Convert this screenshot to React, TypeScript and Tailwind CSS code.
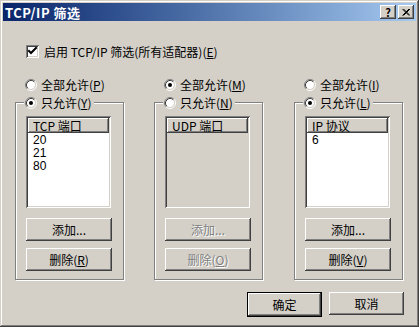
import React from "react";

const raised =
  "shadow-[inset_-1px_-1px_#404040,inset_1px_1px_#ffffff,inset_-2px_-2px_#808080,inset_2px_2px_#d4d0c8]";
const sunken =
  "shadow-[inset_1px_1px_#808080,inset_-1px_-1px_#ffffff,inset_2px_2px_#404040,inset_-2px_-2px_#d4d0c8]";

function Radio({ checked }: { checked: boolean }) {
  return (
    <svg width="12" height="12" viewBox="0 0 12 12" className="shrink-0">
      <circle cx="6" cy="6" r="4.2" fill="#ffffff" />
      <path d="M2.11 9.89 A5.5 5.5 0 0 1 9.89 2.11" stroke="#808080" fill="none" />
      <path d="M9.89 2.11 A5.5 5.5 0 0 1 2.11 9.89" stroke="#ffffff" fill="none" />
      <path d="M2.82 9.18 A4.5 4.5 0 0 1 9.18 2.82" stroke="#404040" fill="none" />
      <path d="M9.18 2.82 A4.5 4.5 0 0 1 2.82 9.18" stroke="#d4d0c8" fill="none" />
      {checked && <circle cx="6" cy="6" r="2" fill="#000000" />}
    </svg>
  );
}

function Checkbox() {
  return (
    <div className={`w-[13px] h-[13px] bg-white shrink-0 ${sunken}`}>
      <svg width="13" height="13" viewBox="0 0 13 13">
        <path d="M3 6 L5 8 L10 3" stroke="#000" strokeWidth="2" fill="none" strokeLinecap="square" />
      </svg>
    </div>
  );
}

function Btn({ children, disabled, w = "w-[86px]" }: { children: React.ReactNode; disabled?: boolean; w?: string }) {
  return (
    <div
      className={`${w} h-[23px] flex items-center justify-center ${raised} ${
        disabled ? "text-[#808080] [text-shadow:1px_1px_#ffffff]" : "text-black"
      }`}
    >
      {children}
    </div>
  );
}

function Column({
  allLabel,
  allKey,
  onlyKey,
  header,
  items,
  onlySelected,
  delKey,
  className,
}: {
  allLabel: string;
  allKey: string;
  onlyKey: string;
  header: string;
  items: string[];
  onlySelected: boolean;
  delKey: string;
  className?: string;
}) {
  const disabled = !onlySelected;
  return (
    <div className={`w-[110px] flex flex-col ${className ?? ""}`}>
      <div className="h-[16px] flex items-center pl-[10px] gap-[4px]">
        <Radio checked={!onlySelected} />
        <span>
          {allLabel}(<u>{allKey}</u>)
        </span>
      </div>
      <div className="relative mt-[9px] w-[109px] h-[178px] border border-[#808080] shadow-[inset_1px_1px_#ffffff,1px_1px_#ffffff] flex flex-col pl-[10px] pt-[13px]">
        <div className="absolute -top-[8px] left-[8px] h-[16px] flex items-center gap-[4px] bg-[#d4d0c8] pl-[1px] pr-[2px]">
          <Radio checked={onlySelected} />
          <span>
            只允许(<u>{onlyKey}</u>)
          </span>
        </div>
        <div className={`w-[85px] h-[92px] p-[2px] ${sunken} ${disabled ? "bg-[#d4d0c8]" : "bg-white"}`}>
          <div className={`h-[15px] flex items-center pl-[5px] bg-[#d4d0c8] ${raised}`}>{header}</div>
          <div className="flex flex-col pl-[5px] pt-[1px] font-['Liberation_Sans',sans-serif] text-[12px]">
            {items.map((it) => (
              <div key={it} className="h-[13px] leading-[13px]">
                {it}
              </div>
            ))}
          </div>
        </div>
        <div className="mt-[10px] flex flex-col gap-[7px]">
          <Btn disabled={disabled}>添加...</Btn>
          <Btn disabled={disabled}>
            删除(<u>{delKey}</u>)
          </Btn>
        </div>
      </div>
    </div>
  );
}

export default function App() {
  return (
    <div
      className={`w-[419px] h-[327px] bg-[#d4d0c8] p-[3px] flex flex-col text-[12px] text-black font-['Noto_Sans_CJK_SC',sans-serif] leading-none shadow-[inset_-1px_-1px_#404040,inset_1px_1px_#d4d0c8,inset_-2px_-2px_#808080,inset_2px_2px_#ffffff]`}
    >
      <div className="h-[18px] flex items-center justify-between bg-gradient-to-r from-[#0a246a] to-[#a6caf0] pl-[2px] pr-[2px]">
        <span className="text-white font-bold text-[13px] tracking-[0.5px]">TCP/IP 筛选</span>
        <div className="flex items-center">
          <div className={`w-[16px] h-[14px] flex items-center justify-center font-bold text-[11px] bg-[#d4d0c8] ${raised}`}>?</div>
          <div className={`ml-[2px] w-[16px] h-[14px] flex items-center justify-center bg-[#d4d0c8] ${raised}`}>
            <svg width="8" height="7" viewBox="0 0 8 7">
              <path d="M0.5 0 L7 6.5 M1.5 0 L8 6.5 M7 0 L0.5 6.5 M8 0 L1.5 6.5" stroke="#000" strokeWidth="1" />
            </svg>
          </div>
        </div>
      </div>

      <div className="mt-[24px] ml-[23px] h-[13px] flex items-center">
        <Checkbox />
        <span className="ml-[5px]">
          启用 TCP/IP 筛选(所有适配器)(<u>E</u>)
        </span>
      </div>

      <div className="mt-[19px] ml-[12px] flex">
        <Column allLabel="全部允许" allKey="P" onlyKey="Y" header="TCP 端口" items={["20", "21", "80"]} onlySelected delKey="R" />
        <Column className="ml-[29px]" allLabel="全部允许" allKey="M" onlyKey="N" header="UDP 端口" items={[]} onlySelected={false} delKey="O" />
        <Column className="ml-[30px]" allLabel="全部允许" allKey="I" onlyKey="L" header="IP 协议" items={["6"]} onlySelected delKey="V" />
      </div>

      <div className="mt-[12px] flex justify-end pr-[12px] gap-[7px]">
        <div className="border border-black">
          <Btn w="w-[73px]">确定</Btn>
        </div>
        <Btn w="w-[75px]">取消</Btn>
      </div>
    </div>
  );
}
